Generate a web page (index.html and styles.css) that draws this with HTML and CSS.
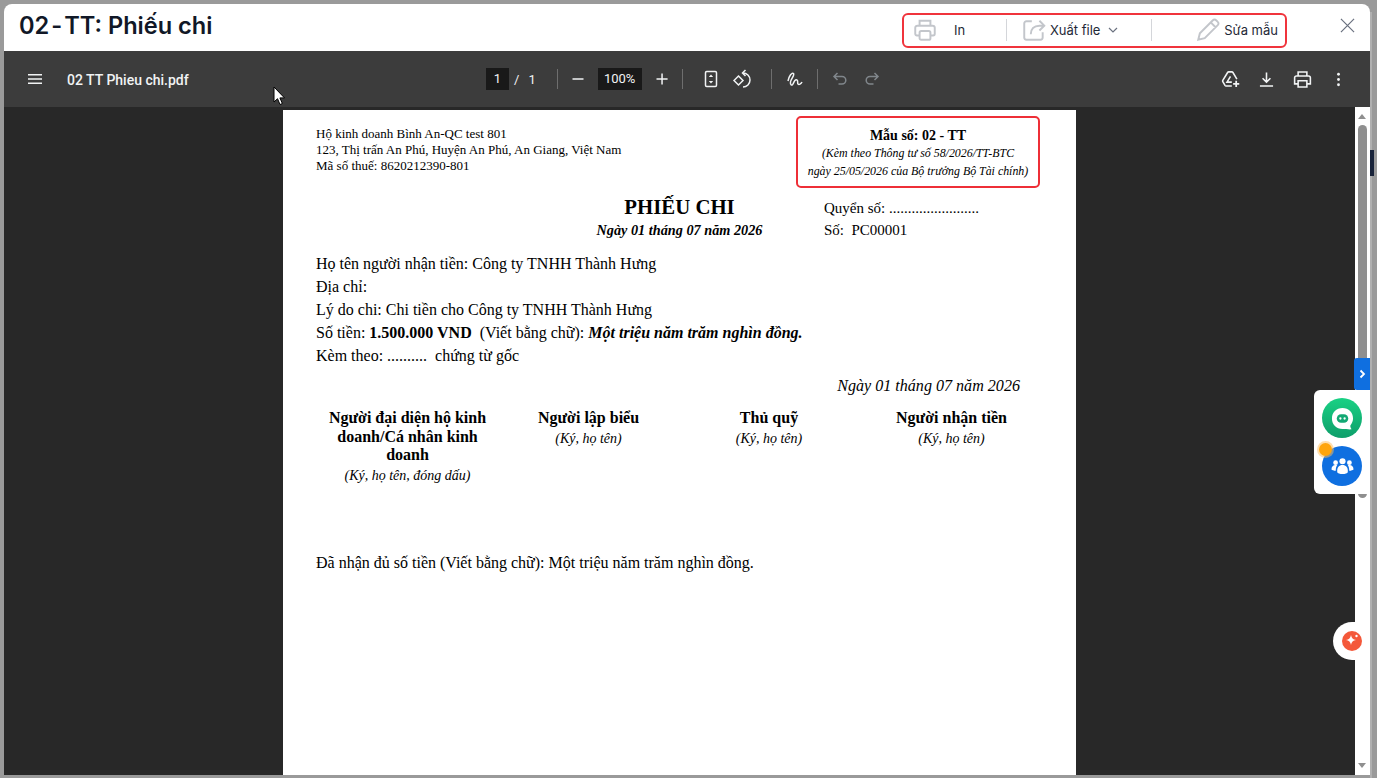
FILE: index.html
```html
<!DOCTYPE html>
<html lang="vi">
<head>
  <meta charset="UTF-8">
  <title>02-TT: Phiếu chi</title>
  <link rel="stylesheet" href="styles.css">
</head>
<body>
  <div class="modal">
    <header class="modal-head">
      <h1 class="modal-title">02<span class="dash">-</span>TT: Phiếu chi</h1>
      <div class="actions">
        <div class="action action-in">
          <svg class="act-icon" viewBox="0 0 24 24"><path d="M7 8V3.500h10V8M7 17H4.500A1.500 1.500 0 0 1 3 15.500V10a2 2 0 0 1 2-2h14a2 2 0 0 1 2 2v5.500a1.500 1.500 0 0 1-1.500 1.500H17"/><rect x="7" y="13" width="10" height="8" rx="1.500"/></svg>
          <span class="act-label">In</span>
        </div>
        <div class="action action-file">
          <svg class="act-icon" viewBox="0 0 24 24"><path d="M10 4H5a2 2 0 0 0-2 2v13a2 2 0 0 0 2 2h13a2 2 0 0 0 2-2v-5"/><path d="M9 16c0-5 3-8 8-8h4M17 3.500 21.500 8 17 12.500"/></svg>
          <span class="act-label">Xuất file</span>
          <svg class="chev" viewBox="0 0 12 12"><path d="M2 4l4 4 4-4"/></svg>
        </div>
        <div class="action action-edit">
          <svg class="act-icon" viewBox="0 0 24 24"><path d="M3 21l1.500-6L16.500 3a2 2 0 0 1 3 0l1.500 1.500a2 2 0 0 1 0 3L9 19.500 3 21zM14.500 5l4.500 4.500"/></svg>
          <span class="act-label">Sửa mẫu</span>
        </div>
      </div>
      <svg class="close" viewBox="0 0 16 16"><path d="M1 1l14 14M15 1 1 15"/></svg>
    </header>

    <div class="toolbar">
      <div class="tb-left">
        <svg class="tb-icon" viewBox="0 0 24 24"><path class="fill" d="M5 7h14v1.500H5zM5 11.300h14v1.500H5zM5 15.600h14v1.500H5z"/></svg>
        <span class="file-name">02 TT Phieu chi.pdf</span>
      </div>
      <div class="tb-center">
        <span class="num-box page-box">1</span>
        <span class="slash">/</span>
        <span class="page-total">1</span>
        <span class="sep sep-a"></span>
        <svg class="tb-icon" viewBox="0 0 24 24"><path class="fill" d="M6.500 11.300h11v1.500h-11z"/></svg>
        <span class="num-box zoom-box">100%</span>
        <svg class="tb-icon" viewBox="0 0 24 24"><path class="fill" d="M6.500 11.300h4.800V6.500h1.500v4.800h4.800v1.500h-4.800v4.800h-1.500v-4.800H6.500z"/></svg>
        <span class="sep sep-b"></span>
        <svg class="tb-icon fit" viewBox="0 0 24 24"><rect x="6.500" y="4.500" width="11" height="15" rx="1.200"/><path class="fill" d="M12 7.500l2.200 2.500H9.800zM12 16.500 9.800 14h4.400z"/></svg>
        <svg class="tb-icon rotate" viewBox="0 0 24 24"><path d="M7.500 9l4.500 4.500L7.500 18 3 13.500z"/><path d="M12 6a7 7 0 1 1 0 14"/><path d="M14.500 3l-3 3 3 3"/></svg>
        <span class="sep sep-c"></span>
        <svg class="tb-icon draw" viewBox="0 0 24 24"><path d="M5 14C6 9 9 5 10.500 6.500 12 8 8 12 7.500 15 7 18 9 19 10 17 11 15 12 12 14 13c1.500 1 0 3 1 4s3 0 4-2"/></svg>
        <span class="sep sep-d"></span>
        <svg class="tb-icon dim undo" viewBox="0 0 24 24"><path d="M9.500 6 6 9.500 9.500 13M6.500 9.500H14a3.800 3.800 0 0 1 0 7.600h-3.500"/></svg>
        <svg class="tb-icon dim redo" viewBox="0 0 24 24"><path d="M14.500 6 18 9.500 14.500 13M17.500 9.500H10a3.800 3.800 0 0 0 0 7.600h3.500"/></svg>
      </div>
      <div class="tb-right">
        <svg class="tb-icon" viewBox="0 0 24 24"><path d="M13.500 19.500H7a1.500 1.500 0 0 1-1.300-.7l-2.500-4.300a1.500 1.500 0 0 1 0-1.500l5.500-9a1.500 1.500 0 0 1 1.300-.7h3.500a1.500 1.500 0 0 1 1.300.7l4.500 7.500"/><path d="M12 8.500 8 15h5.500"/><path class="fill" d="M17.500 13.500h2V16H22v2h-2.500v2.500h-2V18H15v-2h2.500z"/></svg>
        <svg class="tb-icon" viewBox="0 0 24 24"><path d="M12 4v11M7.500 10.500 12 15l4.500-4.500M4.500 19.500h15"/></svg>
        <svg class="tb-icon" viewBox="0 0 24 24"><path d="M7 8V3.500h10V8M7 17H3v-7a2 2 0 0 1 2-2h14a2 2 0 0 1 2 2v7h-4"/><path d="M7 13.500h10v7H7z"/></svg>
        <svg class="tb-icon" viewBox="0 0 24 24"><circle class="fill" cx="12" cy="6" r="1.600"/><circle class="fill" cx="12" cy="12" r="1.600"/><circle class="fill" cx="12" cy="18" r="1.600"/></svg>
      </div>
    </div>

    <div class="viewer">
      <div class="pdf-scroll">
        <div class="paper">
          <div class="paper-top">
            <div class="company">
              <div>Hộ kinh doanh Bình An-QC test 801</div>
              <div>123, Thị trấn An Phú, Huyện An Phú, An Giang, Việt Nam</div>
              <div>Mã số thuế: 8620212390-801</div>
            </div>
            <div class="form-box">
              <div class="form-no">Mẫu số: 02 - TT</div>
              <div class="form-note">(Kèm theo Thông tư số 58/2026/TT-BTC</div>
              <div class="form-note">ngày 25/05/2026 của Bộ trưởng Bộ Tài chính)</div>
            </div>
          </div>

          <div class="title-row">
            <div class="title-col">
              <div class="doc-title">PHIẾU CHI</div>
              <div class="doc-date">Ngày 01 tháng 07 năm 2026</div>
            </div>
            <div class="book-col">
              <div>Quyển số: ........................</div>
              <div class="book-no">Số:&nbsp; PC00001</div>
            </div>
          </div>

          <div class="lines">
            <div>Họ tên người nhận tiền: Công ty TNHH Thành Hưng</div>
            <div>Địa chỉ:</div>
            <div>Lý do chi: Chi tiền cho Công ty TNHH Thành Hưng</div>
            <div>Số tiền: <b>1.500.000 VND</b>&nbsp; (Viết bằng chữ): <b><i>Một triệu năm trăm nghìn đồng.</i></b></div>
            <div>Kèm theo: ..........&nbsp; chứng từ gốc</div>
          </div>

          <div class="sign-date">Ngày 01 tháng 07 năm 2026</div>

          <div class="signs">
            <div class="sign sign-1">
              <div class="sign-name">Người đại diện hộ kinh doanh/Cá nhân kinh doanh</div>
              <div class="sign-note">(Ký, họ tên, đóng dấu)</div>
            </div>
            <div class="sign sign-2">
              <div class="sign-name">Người lập biểu</div>
              <div class="sign-note">(Ký, họ tên)</div>
            </div>
            <div class="sign sign-3">
              <div class="sign-name">Thủ quỹ</div>
              <div class="sign-note">(Ký, họ tên)</div>
            </div>
            <div class="sign sign-4">
              <div class="sign-name">Người nhận tiền</div>
              <div class="sign-note">(Ký, họ tên)</div>
            </div>
          </div>

          <div class="received">Đã nhận đủ số tiền (Viết bằng chữ): Một triệu năm trăm nghìn đồng.</div>
        </div>
      </div>
      <div class="scrollbar">
        <span class="arrow-up"></span>
        <span class="thumb"></span>
        <span class="arrow-down"></span>
      </div>
    </div>
  </div>

  <div class="page-edge"></div>
  <div class="page-strip"></div>

  <div class="collapse-tab">
    <svg viewBox="0 0 10 10"><path d="M3.500 1.500 7 5 3.500 8.500"/></svg>
  </div>
  <div class="chat-card">
    <div class="bubble bubble-green">
      <svg viewBox="0 0 24 24"><path class="bot-ring" d="M12 1C5.500 1 1 5.500 1 12s4.500 11 11 11c3 0 7 .6 9.500 .3-1-1.500-1.500-2.800-1.300-4C22 17 23 14.500 23 12 23 5.500 18.500 1 12 1z"/><rect class="bot-screen" x="6" y="7.500" width="12" height="9" rx="4.500"/><circle class="bot-eye" cx="9.800" cy="12" r="1.200"/><circle class="bot-eye" cx="14.200" cy="12" r="1.200"/></svg>
    </div>
    <div class="bubble bubble-blue">
      <svg viewBox="0 0 24 24"><circle cx="12" cy="6.500" r="3.200"/><circle cx="4.800" cy="8" r="2.500"/><circle cx="19.200" cy="8" r="2.500"/><path d="M6.500 18c-.5-5 2-7.500 5.500-7.500s6 2.500 5.500 7.500c-.5 2.500-10.500 2.500-11 0z"/><path d="M5 16.500c-2 0-4-.6-4.500-1.300 0-3 1.700-4.700 4.300-4.700.6 0 1.200.1 1.700.3-1 1.400-1.600 3.300-1.500 5.700zM19 16.500c2 0 4-.6 4.500-1.300 0-3-1.700-4.700-4.300-4.700-.6 0-1.200.1-1.700.3 1 1.400 1.600 3.300 1.500 5.700z"/></svg>
    </div>
    <span class="dot"></span>
  </div>
  <div class="ai-tab">
    <span class="ai-circle">
      <svg viewBox="0 0 20 20"><path d="M9 4c.5 3 2 4.500 5 5-3 .5-4.500 2-5 5-.5-3-2-4.500-5-5 3-.5 4.500-2 5-5z"/><circle cx="14.500" cy="5" r="1.200"/></svg>
    </span>
  </div>

  <svg class="cursor" viewBox="0 0 13 20"><path d="M1 1v15l3.500-3.300 2.500 5.800 2.400-1-2.500-5.600H11.500z"/></svg>
</body>
</html>
```

FILE: styles.css
```css
* {
  box-sizing: border-box;
}

html, body {
  margin: 0;
  height: 100%;
  overflow: hidden;
}

body {
  background: #9a9a9a;
  padding: 4px 7px 3px 4px;
  font-family: Inter, "Liberation Sans", sans-serif;
}

.modal {
  height: 100%;
  display: flex;
  flex-direction: column;
  background: #fff;
  border-radius: 8px 8px 0 0;
  overflow: hidden;
}

.modal-head {
  height: 47px;
  flex: none;
  display: flex;
  align-items: center;
  padding: 0 15px 0 15px;
}

.modal-title {
  margin: -3px 0 0;
  font-size: 23.600px;
  line-height: 30px;
  font-weight: 600;
  color: #111827;
}

.dash {
  margin: 0 2px;
}

.actions {
  margin-left: auto;
  margin-right: 53px;
  margin-top: 5px;
  width: 385px;
  height: 35px;
  display: flex;
  align-items: center;
  border: 2px solid #f0343c;
  border-radius: 6px;
}

.action {
  height: 22px;
  display: flex;
  align-items: center;
}

.action-in {
  width: 103px;
  padding-left: 8px;
  border-right: 1px solid #d4d6da;
}

.action-in .act-label {
  margin-left: 16px;
}

.action-file {
  width: 145px;
  padding-left: 14px;
  border-right: 1px solid #d4d6da;
}

.action-edit {
  flex: 1;
  justify-content: flex-end;
  padding-right: 7px;
}

.act-icon {
  width: 26px;
  height: 26px;
  fill: none;
  stroke: #c3c6cb;
  stroke-width: 1.800;
  flex: none;
}

.act-label {
  margin-left: 3px;
  font-size: 13px;
  color: #1f2937;
  white-space: nowrap;
}

.chev {
  width: 12px;
  height: 12px;
  margin-left: 7px;
  fill: none;
  stroke: #6b7280;
  stroke-width: 1.200;
}

.close {
  width: 15px;
  height: 15px;
  margin-top: -4px;
  fill: none;
  stroke: #6b7280;
  stroke-width: 1.300;
}

.toolbar {
  height: 56px;
  flex: none;
  display: flex;
  align-items: center;
  position: relative;
  background: #3c3c3c;
  color: #f1f3f4;
}

.tb-left {
  display: flex;
  align-items: center;
  padding-left: 19px;
}

.tb-left .file-name {
  margin: 2px 0 0 20px;
  font-family: Roboto, "Liberation Sans", sans-serif;
  font-size: 14px;
  font-weight: 500;
}

.tb-icon {
  width: 24px;
  height: 24px;
  flex: none;
  fill: none;
  stroke: #f1f3f4;
  stroke-width: 1.500;
}

.tb-icon .fill {
  fill: #f1f3f4;
  stroke: none;
}

.tb-icon.dim {
  stroke: #80868b;
}

.tb-center {
  position: absolute;
  left: 482px;
  top: 17px;
  display: flex;
  align-items: center;
  height: 22px;
  font-family: Roboto, "Liberation Sans", sans-serif;
  font-size: 13px;
}

.num-box {
  height: 22px;
  line-height: 22px;
  background: #191919;
  text-align: center;
}

.page-box {
  width: 23px;
}

.slash {
  margin-left: 5px;
}

.page-total {
  margin-left: 9px;
}

.zoom-box {
  width: 44px;
}

.sep {
  width: 1px;
  height: 20px;
  background: #6e6e6e;
}

.sep-a {
  margin: 0 8px 0 21px;
}

.sep-b {
  margin: 0 16px 0 8px;
}

.tb-center .zoom-box {
  margin: 0 8px 0 8px;
}

.tb-center .rotate {
  margin-left: 8px;
}

.sep-c {
  margin: 0 11px 0 16px;
}

.sep-d {
  margin: 0 10px 0 10px;
}

.tb-center .redo {
  margin-left: 8px;
}

.tb-right {
  margin-left: auto;
  padding-right: 21px;
  display: flex;
  gap: 15px;
}

.tb-right .tb-icon {
  width: 21px;
  height: 21px;
  stroke-width: 1.800;
}

.viewer {
  flex: 1;
  min-height: 0;
  display: flex;
  background: #282828;
}

.pdf-scroll {
  flex: 1;
  min-width: 0;
  padding-top: 3px;
  overflow: hidden;
}

.paper {
  width: 793px;
  height: 700px;
  margin-left: 279px;
  padding: 14px 36px 0 33px;
  background: #fff;
  color: #000;
  font-family: "Liberation Serif", serif;
  font-size: 16px;
}

.paper-top {
  display: flex;
  justify-content: space-between;
}

.company {
  padding-top: 2px;
  font-size: 13px;
  line-height: 16px;
}

.form-box {
  width: 244px;
  height: 72px;
  margin-top: -8px;
  padding-top: 9px;
  border: 2px solid #ee2f37;
  border-radius: 5px;
  text-align: center;
}

.form-no {
  font-size: 14px;
  font-weight: bold;
  line-height: 17px;
}

.form-note {
  font-size: 11.900px;
  font-style: italic;
  line-height: 18px;
  white-space: nowrap;
}

.title-row {
  display: flex;
  margin-top: 7px;
}

.title-col {
  width: 508px;
  padding-left: 219px;
  text-align: center;
  white-space: nowrap;
}

.doc-title {
  font-size: 20.800px;
  font-weight: bold;
  line-height: 24px;
}

.doc-date {
  font-size: 14.250px;
  font-style: italic;
  font-weight: bold;
  line-height: 23px;
}

.book-col {
  font-size: 15px;
  padding-top: 2px;
  line-height: 22px;
}

.lines {
  margin-top: 10px;
  line-height: 23px;
}

.sign-date {
  margin-top: 10px;
  margin-right: 20px;
  text-align: right;
  font-size: 16.100px;
  font-style: italic;
}

.signs {
  display: flex;
  margin-top: 14px;
  text-align: center;
}

.sign {
  flex: none;
}

.sign-1 {
  width: 183px;
}

.sign-2 {
  width: 179px;
}

.sign-3 {
  width: 182px;
}

.sign-4 {
  width: 183px;
}

.sign-name {
  font-size: 16px;
  font-weight: bold;
  line-height: 18.500px;
  padding: 0 8px;
}

.sign-note {
  font-size: 14px;
  font-style: italic;
  line-height: 22px;
}

.received {
  margin-top: 67px;
}

.scrollbar {
  width: 15px;
  flex: none;
  position: relative;
  background: #fff;
}

.thumb {
  position: absolute;
  left: 3px;
  top: 18px;
  width: 9px;
  height: 373px;
  background: #8f8f8f;
  border-radius: 5px;
}

.arrow-up,
.arrow-down {
  position: absolute;
  left: 3px;
  width: 0;
  height: 0;
  border-left: 4.500px solid transparent;
  border-right: 4.500px solid transparent;
}

.arrow-up {
  top: 7px;
  border-bottom: 5px solid #8f8f8f;
}

.arrow-down {
  bottom: 7px;
  border-top: 5px solid #8f8f8f;
}

.page-edge {
  position: absolute;
  left: 1370px;
  top: 12px;
  bottom: 0;
  width: 2px;
  background: #b0b0b0;
}

.page-strip {
  position: absolute;
  left: 1370px;
  top: 150px;
  width: 4px;
  height: 26px;
  background: #18233a;
}

.collapse-tab {
  position: absolute;
  left: 1354px;
  top: 358px;
  width: 16px;
  height: 32px;
  display: flex;
  align-items: center;
  justify-content: center;
  background: #0f6fe0;
  border-radius: 3px 0 0 3px;
}

.collapse-tab svg {
  width: 10px;
  height: 10px;
  fill: none;
  stroke: #fff;
  stroke-width: 1.800;
}

.chat-card {
  position: absolute;
  left: 1314px;
  top: 390px;
  width: 56px;
  height: 104px;
  display: flex;
  flex-direction: column;
  align-items: center;
  gap: 8px;
  padding-top: 8px;
  background: #fff;
  border-radius: 6px 0 0 6px;
}

.bubble {
  width: 40px;
  height: 40px;
  flex: none;
  display: flex;
  align-items: center;
  justify-content: center;
  border-radius: 50%;
}

.bubble-green {
  background: linear-gradient(#19d184, #0e9e6a);
}

.bubble-green svg {
  width: 23px;
  height: 23px;
}

.bot-ring {
  fill: #fff;
}

.bot-screen {
  fill: #12a873;
}

.bot-eye {
  fill: #fff;
}

.bubble-blue {
  background: #0f6fe0;
}

.bubble-blue svg {
  width: 23px;
  height: 23px;
  fill: #fff;
}

.dot {
  position: absolute;
  left: 5px;
  top: 53px;
  width: 13px;
  height: 13px;
  border-radius: 50%;
  background: #ffa50d;
  box-shadow: 0 0 0 2px rgba(255, 190, 90, 0.5);
}

.ai-tab {
  position: absolute;
  left: 1333px;
  top: 622px;
  width: 37px;
  height: 38px;
  display: flex;
  align-items: center;
  padding-left: 9px;
  background: #fff;
  border-radius: 19px 0 0 19px;
}

.ai-circle {
  width: 20px;
  height: 20px;
  display: flex;
  border-radius: 50%;
  background: #f4583a;
}

.ai-circle svg {
  width: 20px;
  height: 20px;
  fill: #fff;
}

.cursor {
  position: absolute;
  left: 273px;
  top: 86px;
  width: 13px;
  height: 20px;
  fill: #fff;
  stroke: #000;
  stroke-width: 1;
}
```
